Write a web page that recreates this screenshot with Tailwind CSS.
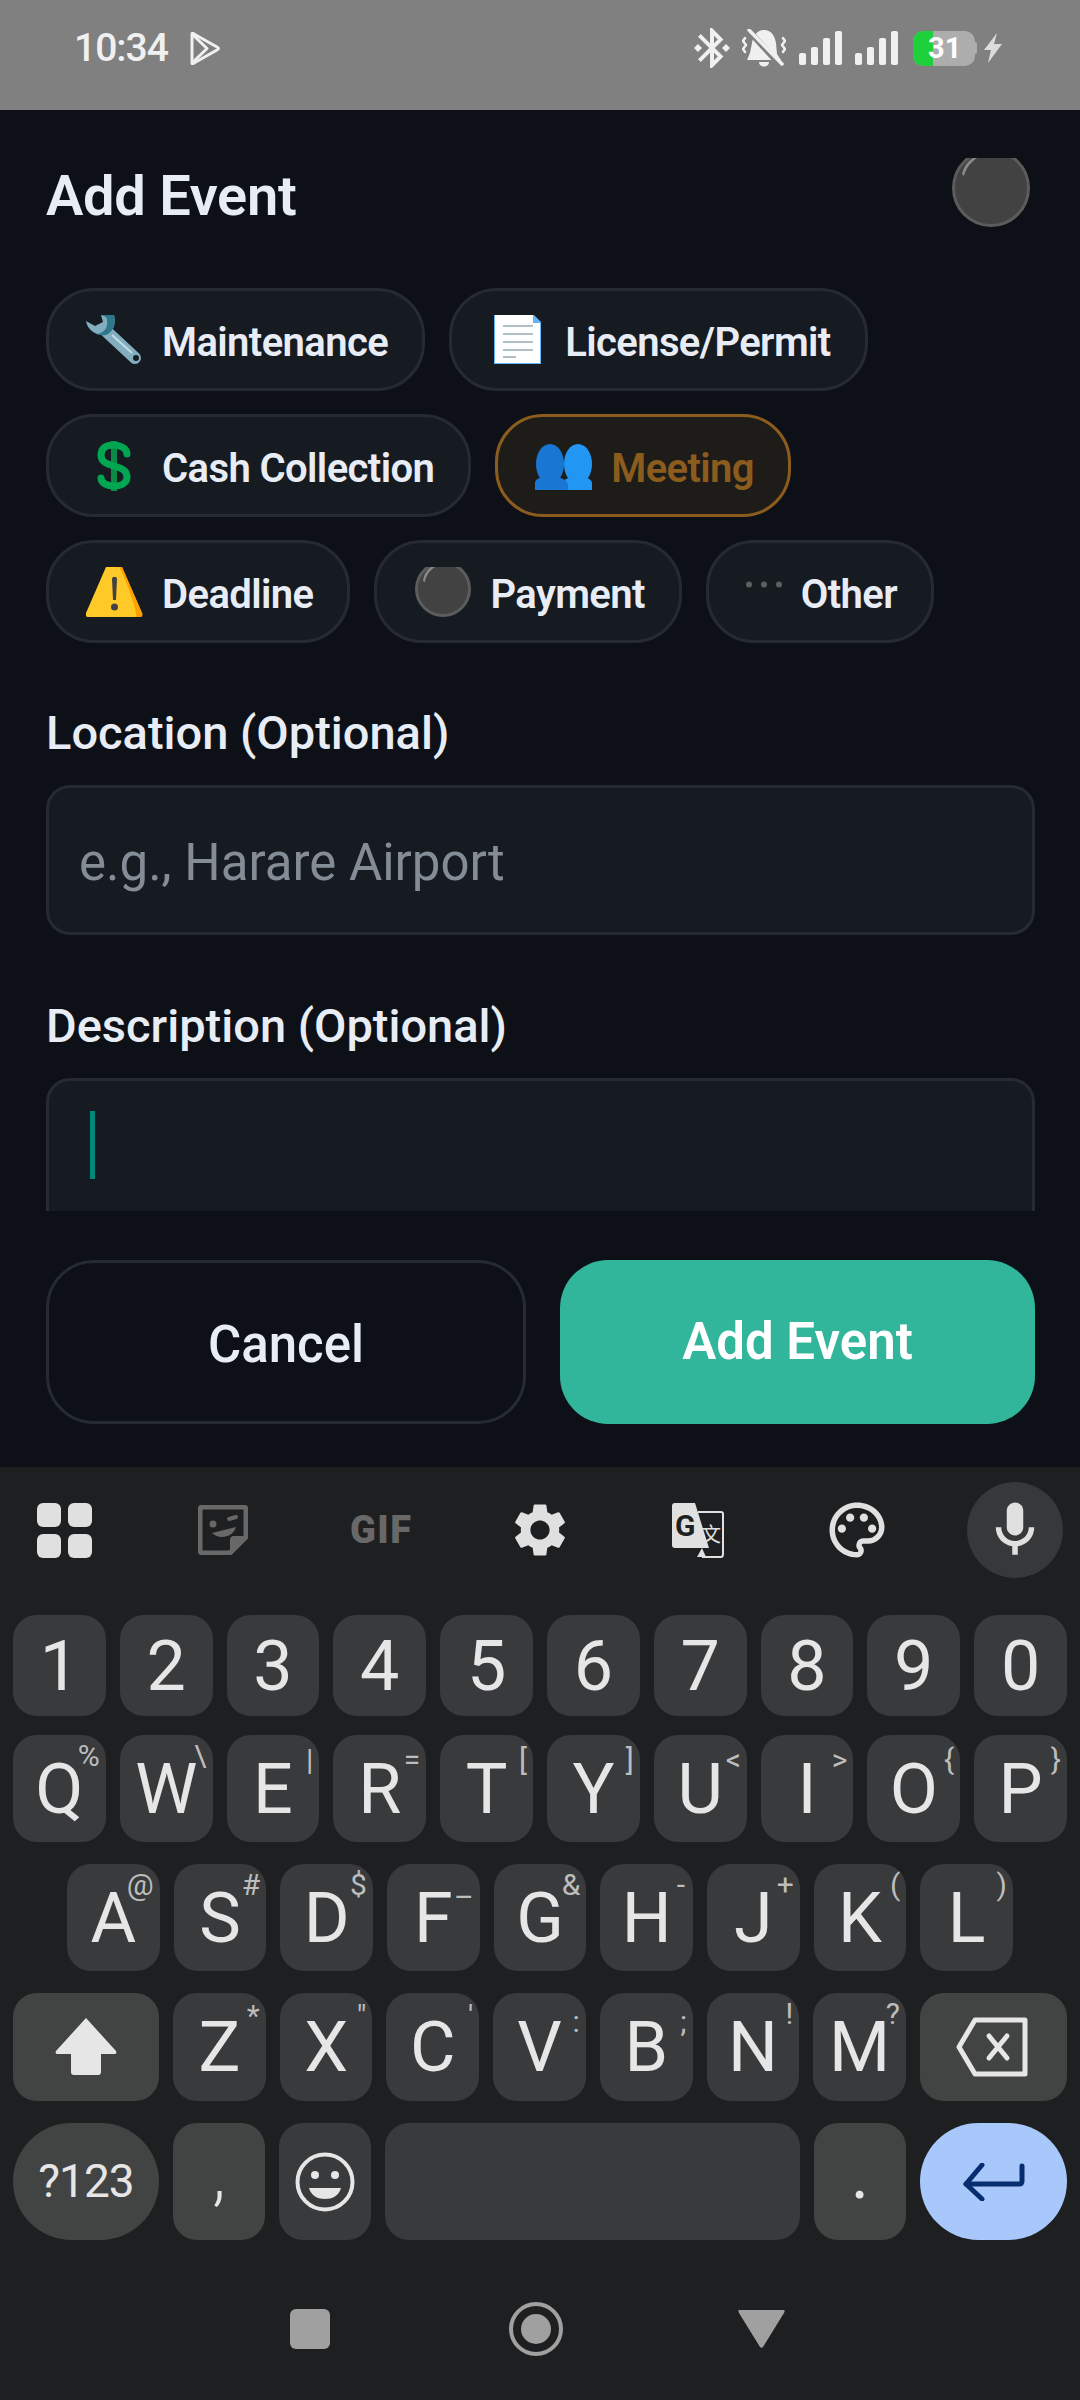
<!DOCTYPE html>
<html lang="en">
<head>
  <meta charset="UTF-8">
  <meta name="viewport" content="width=device-width, initial-scale=1.0">
  <title>Add Event</title>
  <script src="https://cdn.jsdelivr.net/npm/@tailwindcss/browser@4"></script>
</head>
<body class="w-[1080px] h-[2400px] overflow-hidden bg-[#0d1117] font-[family-name:Roboto,sans-serif]">

  <!-- status bar -->
  <div class="h-[110px] bg-[#808080] flex items-center justify-between pl-[74px] pr-[78px] pb-[14px] text-[#f0f0f0]">
    <div class="flex items-center">
      <span class="text-[39px] leading-none font-medium tracking-[-1px]">10:34</span>
      <svg class="ml-[21px]" width="31" height="33" viewBox="0 0 31 33" fill="none" stroke="#f0f0f0" stroke-width="3" stroke-linejoin="round"><path d="M3 2 C3 1 4 1 5 2 L28 15 C30 16 30 17 28 18 L5 31 C4 32 3 32 3 31 Z"/><path d="M3 2 L18 16.5 L3 31"/></svg>
    </div>
    <div class="flex items-center">
      <svg width="48" height="48" viewBox="0 0 24 24" fill="#f0f0f0"><path d="M7 12l-2-2-2 2 2 2 2-2zm10.71-4.29L12 2h-1v7.59L6.41 5 5 6.41 10.59 12 5 17.59 6.41 19 11 14.41V22h1l5.71-5.71-4.3-4.29 4.3-4.29zM13 5.83l1.88 1.88L13 9.59V5.83zm1.88 10.46L13 18.17v-3.76l1.88 1.88zM19 10l-2 2 2 2 2-2-2-2z"/></svg>
      <svg class="ml-[6px]" width="44" height="39" viewBox="0 0 44 39" fill="none">
        <path d="M8 24 L10 14 C11 7 15 1 22 1 C30 1 33 8 34 14 L35 25 L39 31 L5 31 Z M17 33 H27 C27 39 17 39 17 33 Z" fill="#f0f0f0"/>
        <path d="M5 0 L39 37" stroke="#808080" stroke-width="6"/>
        <path d="M7 1 L40 35" stroke="#f0f0f0" stroke-width="3.5" stroke-linecap="round"/>
        <path d="M3 9 L1 12 L4 16 L1 20 L3 23 M41 9 L43 12 L40 16 L43 20 L41 23" stroke="#f0f0f0" stroke-width="2.5" stroke-linecap="round" stroke-linejoin="round"/>
      </svg>
      <div class="ml-[13px] flex items-end gap-[5px] h-[34px]">
        <span class="w-[7px] h-[12px] rounded-[2px] bg-[#f0f0f0]"></span>
        <span class="w-[7px] h-[18px] rounded-[2px] bg-[#f0f0f0]"></span>
        <span class="w-[7px] h-[27px] rounded-[2px] bg-[#f0f0f0]"></span>
        <span class="w-[7px] h-[34px] rounded-[2px] bg-[#f0f0f0]"></span>
      </div>
      <div class="ml-[13px] flex items-end gap-[5px] h-[34px]">
        <span class="w-[7px] h-[12px] rounded-[2px] bg-[#f0f0f0]"></span>
        <span class="w-[7px] h-[18px] rounded-[2px] bg-[#f0f0f0]"></span>
        <span class="w-[7px] h-[27px] rounded-[2px] bg-[#f0f0f0]"></span>
        <span class="w-[7px] h-[34px] rounded-[2px] bg-[#f0f0f0]"></span>
      </div>
      <div class="ml-[15px] flex items-center">
        <div class="relative w-[62px] h-[35px] rounded-[10px] bg-[#adadad] overflow-hidden">
          <div class="w-[20px] h-full bg-[#1ed13c]"></div>
          <span class="absolute left-[15px] top-0 h-[35px] leading-[35px] text-[29px] font-bold text-white">31</span>
        </div>
        <span class="w-[2px] h-[12px] bg-[#adadad] rounded-r-[2px]"></span>
      </div>
      <svg class="ml-[7px]" width="18" height="30" viewBox="0 0 18 30" fill="#dcdcdc"><path d="M13 0 L0 17 H7 L4 30 L18 11 H10 Z"/></svg>
    </div>
  </div>

  <!-- sheet -->
  <div class="h-[1357px]">
    <div class="h-[1101px] overflow-hidden">
      <div class="h-[178px] flex justify-between pl-[46px] pr-[50px]">
        <h1 class="mt-[56px] h-[60px] text-[56px] leading-[60px] font-semibold tracking-[-0.3px] text-[#e8edf5]">Add Event</h1>
        <svg class="mt-[48px]" width="78" height="69" viewBox="0 0 78 69"><circle cx="39" cy="30" r="37.5" fill="#424242" stroke="#5c5c5c" stroke-width="3"/><path d="M10 16 C12 8 16 3 21 0 L25 0 C19 4 14 10 12 18 Z" fill="#8a8a8a"/></svg>
      </div>

      <!-- category chips -->
      <div class="pl-[46px] flex flex-col gap-[23px]">
        <div class="flex gap-[24px]">
          <button class="h-[103px] box-border flex items-center gap-[18px] pl-[37px] pr-[34px] rounded-[48px] border-[3px] border-[#262b33] bg-[#161b22] text-[40px] font-semibold tracking-[-0.6px] text-[#e8edf5]">
            <svg width="58" height="50" viewBox="0 0 58 50">
              <path d="M20 16 L49 43" stroke="#82aec0" stroke-width="12" stroke-linecap="round"/>
              <path d="M0 6 L9 11 L17 7 L15 0 L28 0 C30 8 28 15 22 19 C13 22 2 17 0 6 Z" fill="#82aec0"/>
              <path d="M15 0 L28 0 C30 8 28 15 22 19 C18 21 14 20 10 19 C18 19 24 11 20 2 Z" fill="#2f7889"/>
              <path d="M26 20 L46 38" stroke="#c4dde6" stroke-width="2"/>
              <circle cx="50" cy="43" r="3" fill="#161b22"/>
            </svg>
            <span class="mt-[6px]">Maintenance</span>
          </button>
          <button class="h-[103px] box-border flex items-center gap-[18px] pl-[37px] pr-[34px] rounded-[48px] border-[3px] border-[#262b33] bg-[#161b22] text-[40px] font-semibold tracking-[-0.6px] text-[#e8edf5]">
            <svg width="58" height="50" viewBox="0 0 58 50">
              <path d="M5 0 H45 L52 7 V49 H5 Z" fill="#64b5f6"/>
              <path d="M6 0 H44 V8 H51 V48 H6 Z" fill="#ffffff"/>
              <path d="M44 0 L52 8 H44 Z" fill="#64b5f6"/>
              <path d="M14 11 H44 M14 19 H44 M14 27 H44 M14 35 H44 M14 42 H27" stroke="#b0bec5" stroke-width="2"/>
            </svg>
            <span class="mt-[6px]">License/Permit</span>
          </button>
        </div>
        <div class="flex gap-[24px]">
          <button class="h-[103px] box-border flex items-center gap-[18px] pl-[37px] pr-[34px] rounded-[48px] border-[3px] border-[#262b33] bg-[#161b22] text-[40px] font-semibold tracking-[-0.6px] text-[#e8edf5]">
            <svg width="58" height="50" viewBox="0 0 58 50" fill="none">
              <path d="M28 0 V50" stroke="#0b8a45" stroke-width="6"/>
              <path d="M41 13 C41 7 34 4 27 4 C19 4 15 8 15 14 C15 21 21 23 28 25 C35 27 41 29 41 36 C41 42 35 45 28 45 C21 45 15 42 15 37" stroke="#00a651" stroke-width="7" stroke-linecap="round"/>
            </svg>
            <span class="mt-[6px]">Cash Collection</span>
          </button>
          <button class="h-[103px] box-border flex items-center gap-[18px] pl-[37px] pr-[34px] rounded-[48px] border-[3px] border-[#8b5c1e] bg-[#1e1c18] text-[40px] font-semibold tracking-[-0.6px] text-[#8b5c1e]">
            <svg width="58" height="50" viewBox="0 0 58 50">
              <ellipse cx="43" cy="23" rx="14" ry="20" fill="#2196f3"/>
              <path d="M27 49 V42 C28 38 35 37 38 35 H48 C51 37 57 38 57 42 V49 Z" fill="#2196f3"/>
              <ellipse cx="15" cy="23" rx="14" ry="20" fill="#1976d2"/>
              <path d="M0 49 V42 C0 38 5 37 9 35 H21 C25 37 32 38 33 44 V49 Z" fill="#1976d2"/>
            </svg>
            <span class="mt-[6px]">Meeting</span>
          </button>
        </div>
        <div class="flex gap-[24px]">
          <button class="h-[103px] box-border flex items-center gap-[18px] pl-[37px] pr-[34px] rounded-[48px] border-[3px] border-[#262b33] bg-[#161b22] text-[40px] font-semibold tracking-[-0.6px] text-[#e8edf5]">
            <svg width="58" height="50" viewBox="0 0 58 50">
              <path d="M20 0 H36 L56 46 C57 48 56 50 54 50 H2 C0 50 -1 48 0 46 Z" fill="#ffca28"/>
              <path d="M33 0 H36 L56 46 C57 48 56 50 54 50 H50 C52 46 40 12 33 0 Z" fill="#ffa000"/>
              <path d="M26 12 C26 9 31 9 31 12 L30 33 H27 Z" fill="#424242"/>
              <circle cx="28.5" cy="40" r="3.5" fill="#424242"/>
            </svg>
            <span class="mt-[6px]">Deadline</span>
          </button>
          <button class="h-[103px] box-border flex items-center gap-[18px] pl-[37px] pr-[34px] rounded-[48px] border-[3px] border-[#262b33] bg-[#161b22] text-[40px] font-semibold tracking-[-0.6px] text-[#e8edf5]">
            <svg width="58" height="50" viewBox="0 0 58 50">
              <circle cx="29" cy="22" r="26.5" fill="#424242" stroke="#5c5c5c" stroke-width="3"/>
              <path d="M9 14 C10 7 13 3 17 0 L21 0 C16 3 12 8 11 15 Z" fill="#8a8a8a"/>
            </svg>
            <span class="mt-[6px]">Payment</span>
          </button>
          <button class="h-[103px] box-border flex items-center gap-[18px] pl-[37px] pr-[34px] rounded-[48px] border-[3px] border-[#262b33] bg-[#161b22] text-[40px] font-semibold tracking-[-0.6px] text-[#e8edf5]">
            <svg width="37" height="50" viewBox="0 0 37 50" fill="#55655d"><circle cx="3" cy="17.5" r="3"/><circle cx="18" cy="17.5" r="3"/><circle cx="33" cy="17.5" r="3"/></svg>
            <span class="mt-[6px]">Other</span>
          </button>
        </div>
      </div>

      <!-- fields -->
      <div class="pl-[46px] pr-[45px]">
        <label class="block mt-[63px] mb-[25px] h-[54px] text-[47px] leading-[54px] font-medium text-[#e8edf5]">Location (Optional)</label>
        <input type="text" placeholder="e.g., Harare Airport" class="block w-full h-[150px] box-border px-[30px] pt-[4px] rounded-[24px] border-[3px] border-[#262b33] bg-[#161b22] text-[51px] text-[#e8edf5] placeholder:text-[#848c96] outline-none">
        <label class="block mt-[64px] mb-[25px] h-[54px] text-[47px] leading-[54px] font-medium text-[#e8edf5]">Description (Optional)</label>
        <div class="h-[200px] box-border pl-[41px] pt-[30px] rounded-[24px] border-[3px] border-[#262b33] bg-[#161b22]">
          <div class="w-[5px] h-[68px] bg-[#00897b]"></div>
        </div>
      </div>
    </div>

    <!-- actions -->
    <div class="flex gap-[34px] pl-[46px] pr-[45px] pt-[49px] h-[256px] box-border">
      <button class="w-[480px] h-[164px] pt-[6px] box-border rounded-[48px] border-[3px] border-[#262b33] text-[51px] font-medium text-[#e8edf5]">Cancel</button>
      <button class="w-[475px] h-[164px] box-border rounded-[48px] bg-[#31b69c] text-[51px] font-semibold text-white">Add Event</button>
    </div>
  </div>

  <!-- keyboard -->
  <div class="h-[933px] bg-[#1e1f21] text-[#e6e6e6]">
    <div class="flex ml-[-15px] pt-[15px] h-[148px] box-border">
      <div class="w-[158.5px] shrink-0 h-[96px] flex items-center justify-center">
        <div class="grid grid-cols-2 gap-[7px]">
          <span class="w-[24px] h-[24px] rounded-[6px] bg-[#e0e0e0]"></span>
          <span class="w-[24px] h-[24px] rounded-[6px] bg-[#e0e0e0]"></span>
          <span class="w-[24px] h-[24px] rounded-[6px] bg-[#e0e0e0]"></span>
          <span class="w-[24px] h-[24px] rounded-[6px] bg-[#e0e0e0]"></span>
        </div>
      </div>
      <div class="w-[158.5px] shrink-0 h-[96px] flex items-center justify-center">
        <svg width="50" height="50" viewBox="0 0 50 50" fill="none">
          <path d="M5 2 H45 C47 2 48 3 48 5 V32 L32 48 H5 C3 48 2 47 2 45 V5 C2 3 3 2 5 2 Z" stroke="#686868" stroke-width="5"/>
          <path d="M48 31 H36 C33 31 32 33 32 35 V48 Z" fill="#686868"/>
          <circle cx="15" cy="19" r="3.5" fill="#686868"/>
          <path d="M31 14 L38 12" stroke="#686868" stroke-width="4" stroke-linecap="round"/>
          <path d="M14 28 L38 22 C36 31 22 36 14 28 Z" fill="#686868"/>
        </svg>
      </div>
      <div class="w-[158.5px] shrink-0 h-[96px] flex items-center justify-center">
        <span class="text-[38px] leading-none font-black tracking-[1.5px] text-[#686868]">GIF</span>
      </div>
      <div class="w-[158.5px] shrink-0 h-[96px] flex items-center justify-center">
        <svg width="64" height="64" viewBox="0 0 24 24" fill="#e0e0e0"><path d="M19.14 12.94c.04-.3.06-.61.06-.94 0-.32-.02-.64-.07-.94l2.03-1.58c.18-.14.23-.41.12-.61l-1.92-3.32c-.12-.22-.37-.29-.59-.22l-2.39.96c-.5-.38-1.03-.7-1.62-.94l-.36-2.54c-.04-.24-.24-.41-.48-.41h-3.84c-.24 0-.43.17-.47.41l-.36 2.54c-.59.24-1.13.57-1.62.94l-2.39-.96c-.22-.08-.47 0-.59.22L2.74 8.87c-.12.21-.08.47.12.61l2.03 1.58c-.05.3-.09.63-.09.94s.02.64.07.94l-2.03 1.58c-.18.14-.23.41-.12.61l1.92 3.32c.12.22.37.29.59.22l2.39-.96c.5.38 1.03.7 1.62.94l.36 2.54c.05.24.24.41.48.41h3.84c.24 0 .44-.17.47-.41l.36-2.54c.59-.24 1.13-.56 1.62-.94l2.39.96c.22.08.47 0 .59-.22l1.92-3.32c.12-.22.07-.47-.12-.61l-2.01-1.58zM12 15.6c-1.98 0-3.6-1.62-3.6-3.6s1.62-3.6 3.6-3.6 3.6 1.62 3.6 3.6-1.62 3.6-3.6 3.6z"/></svg>
      </div>
      <div class="w-[158.5px] shrink-0 h-[96px] flex items-center justify-center">
        <svg width="52" height="55" viewBox="0 0 52 55" fill="none">
          <path d="M26 9 H49 C50 9 51 10 51 11 V51 C51 53 50 54 49 54 H30" stroke="#e0e0e0" stroke-width="2"/>
          <path d="M3 0 H23 L37 45 H3 C1 45 0 44 0 42 V3 C0 1 1 0 3 0 Z" fill="#e0e0e0"/>
          <path d="M30 45 L34 54 L25 54 Z" fill="#e0e0e0"/>
          <text x="3" y="33" font-family="Roboto" font-size="30" font-weight="700" fill="#1e1f21">G</text>
          <text x="29" y="39" font-family="'Noto Sans CJK SC'" font-size="20" fill="#e0e0e0">文</text>
        </svg>
      </div>
      <div class="w-[158.5px] shrink-0 h-[96px] flex items-center justify-center">
        <svg width="66" height="66" viewBox="0 0 24 24" fill="#e0e0e0"><path d="M12 22C6.49 22 2 17.51 2 12S6.49 2 12 2s10 4.04 10 9c0 3.31-2.69 6-6 6h-1.77c-.28 0-.5.22-.5.5 0 .12.05.23.13.33.41.47.64 1.06.64 1.67A2.5 2.5 0 0 1 12 22zm0-18c-4.41 0-8 3.59-8 8s3.59 8 8 8c.28 0 .5-.22.5-.5a.54.54 0 0 0-.14-.35c-.41-.46-.63-1.05-.63-1.65a2.5 2.5 0 0 1 2.5-2.5H16c2.21 0 4-1.79 4-4 0-3.86-3.59-7-8-7z"/><circle cx="6.5" cy="11.5" r="1.5"/><circle cx="9.5" cy="7.5" r="1.5"/><circle cx="14.5" cy="7.5" r="1.5"/><circle cx="17.5" cy="11.5" r="1.5"/></svg>
      </div>
      <div class="w-[158.5px] shrink-0 h-[96px] flex items-center justify-center">
        <div class="w-[96px] h-[96px] rounded-full bg-[#37383a] flex items-center justify-center">
          <svg width="66" height="66" viewBox="0 0 24 24" fill="#e0e0e0"><path d="M12 14c1.66 0 3-1.34 3-3V5c0-1.66-1.34-3-3-3S9 3.34 9 5v6c0 1.66 1.34 3 3 3z"/><path d="M17 11c0 2.76-2.24 5-5 5s-5-2.24-5-5H5c0 3.53 2.61 6.43 6 6.92V21h2v-3.08c3.39-.49 6-3.39 6-6.92h-2z"/></svg>
        </div>
      </div>
    </div>

    <!-- digits -->
    <div class="grid grid-cols-10 gap-[14px] px-[13px] h-[101px] text-[70px] leading-none">
      <div class="rounded-[24px] bg-[#393a3c] flex items-center justify-center">1</div>
      <div class="rounded-[24px] bg-[#393a3c] flex items-center justify-center">2</div>
      <div class="rounded-[24px] bg-[#393a3c] flex items-center justify-center">3</div>
      <div class="rounded-[24px] bg-[#393a3c] flex items-center justify-center">4</div>
      <div class="rounded-[24px] bg-[#393a3c] flex items-center justify-center">5</div>
      <div class="rounded-[24px] bg-[#393a3c] flex items-center justify-center">6</div>
      <div class="rounded-[24px] bg-[#393a3c] flex items-center justify-center">7</div>
      <div class="rounded-[24px] bg-[#393a3c] flex items-center justify-center">8</div>
      <div class="rounded-[24px] bg-[#393a3c] flex items-center justify-center">9</div>
      <div class="rounded-[24px] bg-[#393a3c] flex items-center justify-center">0</div>
    </div>

    <!-- qwerty -->
    <div class="grid grid-cols-10 gap-[14px] px-[13px] h-[107px] mt-[19px] text-[70px] leading-none">
      <div class="relative rounded-[24px] bg-[#393a3c] flex items-center justify-center">Q<span class="absolute top-[6px] right-[6px] text-[30px] leading-[30px] text-[#bdbdbd]">%</span></div>
      <div class="relative rounded-[24px] bg-[#393a3c] flex items-center justify-center">W<span class="absolute top-[6px] right-[6px] text-[30px] leading-[30px] text-[#bdbdbd]">\</span></div>
      <div class="relative rounded-[24px] bg-[#393a3c] flex items-center justify-center">E<span class="absolute top-[10px] right-[6px] text-[30px] leading-[30px] text-[#bdbdbd]">|</span></div>
      <div class="relative rounded-[24px] bg-[#393a3c] flex items-center justify-center">R<span class="absolute top-[10px] right-[6px] text-[30px] leading-[30px] text-[#bdbdbd]">=</span></div>
      <div class="relative rounded-[24px] bg-[#393a3c] flex items-center justify-center">T<span class="absolute top-[10px] right-[6px] text-[30px] leading-[30px] text-[#bdbdbd]">[</span></div>
      <div class="relative rounded-[24px] bg-[#393a3c] flex items-center justify-center">Y<span class="absolute top-[10px] right-[6px] text-[30px] leading-[30px] text-[#bdbdbd]">]</span></div>
      <div class="relative rounded-[24px] bg-[#393a3c] flex items-center justify-center">U<span class="absolute top-[10px] left-[72px] text-[30px] leading-[30px] text-[#bdbdbd]">&lt;</span></div>
      <div class="relative rounded-[24px] bg-[#393a3c] flex items-center justify-center">I<span class="absolute top-[10px] right-[6px] text-[30px] leading-[30px] text-[#bdbdbd]">&gt;</span></div>
      <div class="relative rounded-[24px] bg-[#393a3c] flex items-center justify-center">O<span class="absolute top-[10px] right-[6px] text-[30px] leading-[30px] text-[#bdbdbd]">{</span></div>
      <div class="relative rounded-[24px] bg-[#393a3c] flex items-center justify-center">P<span class="absolute top-[10px] right-[6px] text-[30px] leading-[30px] text-[#bdbdbd]">}</span></div>
    </div>

    <!-- asdf -->
    <div class="grid grid-cols-9 gap-[14px] px-[67px] h-[107px] mt-[22px] text-[70px] leading-none">
      <div class="relative rounded-[24px] bg-[#393a3c] flex items-center justify-center">A<span class="absolute top-[6px] right-[6px] text-[30px] leading-[30px] text-[#bdbdbd]">@</span></div>
      <div class="relative rounded-[24px] bg-[#393a3c] flex items-center justify-center">S<span class="absolute top-[6px] right-[6px] text-[30px] leading-[30px] text-[#bdbdbd]">#</span></div>
      <div class="relative rounded-[24px] bg-[#393a3c] flex items-center justify-center">D<span class="absolute top-[6px] right-[6px] text-[30px] leading-[30px] text-[#bdbdbd]">$</span></div>
      <div class="relative rounded-[24px] bg-[#393a3c] flex items-center justify-center">F<span class="absolute top-[18px] right-[6px] text-[30px] leading-[30px] text-[#bdbdbd]">–</span></div>
      <div class="relative rounded-[24px] bg-[#393a3c] flex items-center justify-center">G<span class="absolute top-[6px] right-[6px] text-[30px] leading-[30px] text-[#bdbdbd]">&amp;</span></div>
      <div class="relative rounded-[24px] bg-[#393a3c] flex items-center justify-center">H<span class="absolute top-[6px] right-[8px] text-[30px] leading-[30px] text-[#bdbdbd]">-</span></div>
      <div class="relative rounded-[24px] bg-[#393a3c] flex items-center justify-center">J<span class="absolute top-[6px] right-[6px] text-[30px] leading-[30px] text-[#bdbdbd]">+</span></div>
      <div class="relative rounded-[24px] bg-[#393a3c] flex items-center justify-center">K<span class="absolute top-[6px] right-[6px] text-[30px] leading-[30px] text-[#bdbdbd]">(</span></div>
      <div class="relative rounded-[24px] bg-[#393a3c] flex items-center justify-center">L<span class="absolute top-[6px] right-[6px] text-[30px] leading-[30px] text-[#bdbdbd]">)</span></div>
    </div>

    <!-- zxcv -->
    <div class="flex gap-[14px] px-[13px] h-[108px] mt-[22px] text-[70px] leading-none">
      <div class="w-[146px] rounded-[24px] bg-[#424444] flex items-center justify-center">
        <svg width="62" height="58" viewBox="0 0 62 58" fill="#e6e6e6"><path d="M31 0 L61 33 C62 35 61 36 59 36 H46 V54 C46 56 45 57 43 57 H19 C17 57 16 56 16 54 V36 H3 C1 36 0 35 1 33 Z"/></svg>
      </div>
      <div class="relative flex-1 rounded-[24px] bg-[#393a3c] flex items-center justify-center">Z<span class="absolute top-[8px] right-[6px] text-[30px] leading-[30px] text-[#bdbdbd]">*</span></div>
      <div class="relative flex-1 rounded-[24px] bg-[#393a3c] flex items-center justify-center">X<span class="absolute top-[8px] right-[6px] text-[30px] leading-[30px] text-[#bdbdbd]">"</span></div>
      <div class="relative flex-1 rounded-[24px] bg-[#393a3c] flex items-center justify-center">C<span class="absolute top-[8px] right-[6px] text-[30px] leading-[30px] text-[#bdbdbd]">'</span></div>
      <div class="relative flex-1 rounded-[24px] bg-[#393a3c] flex items-center justify-center">V<span class="absolute top-[14px] right-[6px] text-[30px] leading-[30px] text-[#bdbdbd]">:</span></div>
      <div class="relative flex-1 rounded-[24px] bg-[#393a3c] flex items-center justify-center">B<span class="absolute top-[14px] right-[6px] text-[30px] leading-[30px] text-[#bdbdbd]">;</span></div>
      <div class="relative flex-1 rounded-[24px] bg-[#393a3c] flex items-center justify-center">N<span class="absolute top-[6px] right-[6px] text-[30px] leading-[30px] text-[#bdbdbd]">!</span></div>
      <div class="relative flex-1 rounded-[24px] bg-[#393a3c] flex items-center justify-center">M<span class="absolute top-[6px] right-[6px] text-[30px] leading-[30px] text-[#bdbdbd]">?</span></div>
      <div class="w-[147px] rounded-[24px] bg-[#424444] flex items-center justify-center pr-[3px]">
        <svg width="72" height="60" viewBox="0 0 72 60" fill="none" stroke="#e6e6e6" stroke-width="5" stroke-linejoin="round"><path d="M19 3 H69 V57 H19 L3 30 Z"/><path d="M33 19 L51 41 M51 19 L33 41" stroke-linecap="round"/></svg>
      </div>
    </div>

    <!-- bottom row -->
    <div class="flex gap-[14px] px-[13px] h-[117px] mt-[22px]">
      <div class="w-[146px] rounded-full bg-[#424444] flex items-center justify-center text-[46px] tracking-[-1px]">?123</div>
      <div class="w-[92px] rounded-[24px] bg-[#424444] flex items-center justify-center pb-[16px] text-[70px] font-light leading-none">,</div>
      <div class="w-[92px] rounded-[24px] bg-[#393a3c] flex items-center justify-center">
        <svg width="62" height="60" viewBox="0 0 62 60" fill="none"><circle cx="31" cy="30" r="27.5" stroke="#e6e6e6" stroke-width="4"/><circle cx="21" cy="23" r="4" fill="#e6e6e6"/><circle cx="41" cy="23" r="4" fill="#e6e6e6"/><path d="M15 36 H47 C45 44 38 47 31 47 C24 47 17 44 15 36 Z" fill="#e6e6e6"/></svg>
      </div>
      <div class="flex-1 rounded-[24px] bg-[#393a3c]"></div>
      <div class="w-[92px] rounded-[24px] bg-[#424444] flex items-center justify-center pb-[16px] text-[70px] leading-none">.</div>
      <div class="w-[147px] rounded-full bg-[#a8c7fa] flex items-center justify-center">
        <svg width="62" height="38" viewBox="0 0 62 38" fill="none" stroke="#062e6f" stroke-width="5" stroke-linecap="round" stroke-linejoin="round"><path d="M59 3 V18 C59 20 58 21 56 21 H3"/><path d="M19 2 L3 21 L19 36"/></svg>
      </div>
    </div>

    <!-- navigation -->
    <div class="flex items-center h-[54px] mt-[62px] pl-[290px]">
      <div class="w-[40px] h-[40px] rounded-[6px] bg-[#a0a0a0]"></div>
      <svg class="ml-[179px]" width="54" height="54" viewBox="0 0 54 54" fill="none"><circle cx="27" cy="27" r="25" stroke="#a0a0a0" stroke-width="4"/><circle cx="27" cy="27" r="15" fill="#a0a0a0"/></svg>
      <svg class="ml-[175px]" width="47" height="38" viewBox="0 0 47 38" fill="#a0a0a0"><path d="M2 0 H45 C47 0 47 1 46 3 L25 37 C24 38 23 38 22 37 L1 3 C0 1 0 0 2 0 Z"/></svg>
    </div>
  </div>
</body>
</html>
